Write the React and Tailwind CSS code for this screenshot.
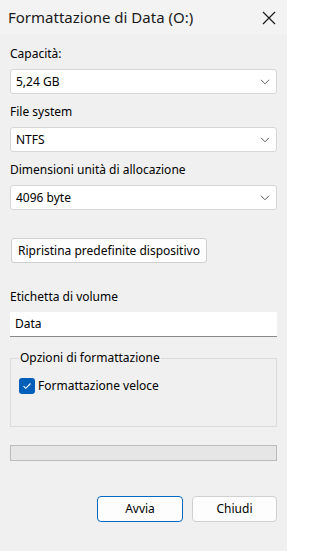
function Chevron() {
  return (
    <svg width="10" height="6" viewBox="0 0 10 6" className="text-[#5f5f5f]">
      <path d="M1 0.8 L5 4.8 L9 0.8" fill="none" stroke="currentColor" strokeWidth="1" />
    </svg>
  );
}

function Select({ value }) {
  return (
    <div className="flex h-[25px] items-center justify-between rounded-[3px] border border-[#d6d6d6] bg-white pl-[5px] pr-[6px]">
      <span>{value}</span>
      <Chevron />
    </div>
  );
}

function Field({ label, children }) {
  return (
    <div className="flex flex-col">
      <div className="mb-[7px] h-4 leading-4">{label}</div>
      {children}
    </div>
  );
}

export default function App() {
  return (
    <div
      className="flex h-[551px] w-[287px] flex-col bg-[#f0f0f0] text-[12px] text-black"
      style={{ fontFamily: '"Noto Sans", "Open Sans", sans-serif' }}
    >
      <div className="flex h-[35px] items-center justify-between bg-[#f3f3f3] pl-[8px] pr-[11px]">
        <span className="text-[15px] text-[#1a1a1a]">Formattazione di Data (O:)</span>
        <svg width="14" height="14" viewBox="0 0 14 14">
          <path d="M1 1 L13 13 M13 1 L1 13" stroke="#1a1a1a" strokeWidth="1.2" fill="none" />
        </svg>
      </div>

      <div className="flex flex-col px-[10px] pt-[11px]">
        <div className="flex flex-col gap-[10px]">
          <Field label="Capacità:">
            <Select value="5,24 GB" />
          </Field>
          <Field label="File system">
            <Select value="NTFS" />
          </Field>
          <Field label="Dimensioni unità di allocazione">
            <Select value="4096 byte" />
          </Field>
        </div>

        <div className="mt-[28px] flex">
          <button className="ml-px h-[25px] rounded-[3px] border border-[#d0d0d0] bg-[#fdfdfd] px-[6px]">
            Ripristina predefinite dispositivo
          </button>
        </div>

        <div className="mt-[26px]">
          <Field label="Etichetta di volume">
            <div className="flex h-[25px] items-center border-b border-[#8a8a8a] bg-white px-[5px]">Data</div>
          </Field>
        </div>

        <fieldset className="mt-[13px] h-[77px] border border-[#dcdcdc] px-[8px] pb-0 pt-0">
          <legend className="px-[1px] leading-4">Opzioni di formattazione</legend>
          <div className="mt-[11px] flex items-center gap-[3px]">
            <span className="flex h-4 w-4 items-center justify-center rounded-[3px] bg-[#005fb8]">
              <svg width="10" height="8" viewBox="0 0 10 8">
                <path d="M1.5 4.2 L3.8 6.3 L8.5 1.5" stroke="white" strokeWidth="1.1" fill="none" />
              </svg>
            </span>
            <span>Formattazione veloce</span>
          </div>
        </fieldset>

        <div className="mt-[18px] h-4 border border-[#bcbcbc] bg-[#e6e6e6]" />

        <div className="mt-[35px] flex justify-end gap-[9px]">
          <button className="h-[26px] w-[86px] rounded-[4px] border border-[#0067c0] bg-[#fdfdfd]">Avvia</button>
          <button className="h-[26px] w-[85px] rounded-[4px] border border-[#d0d0d0] bg-[#fdfdfd]">Chiudi</button>
        </div>
      </div>
    </div>
  );
}
